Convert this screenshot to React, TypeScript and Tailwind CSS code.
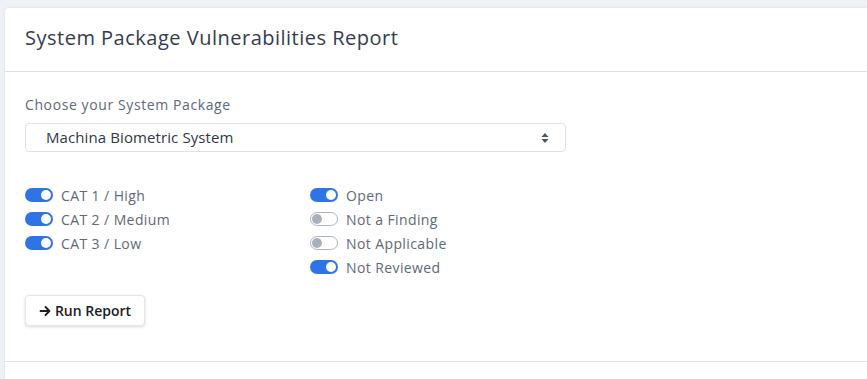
import React from "react";

function Toggle({ on, label }: { on: boolean; label: string }) {
  return (
    <div className="flex items-center h-6 gap-2">
      {on ? (
        <span className="relative w-[28px] h-[14px] rounded-full bg-[#2f74e4] flex items-center justify-end pr-[2px]">
          <span className="w-[10px] h-[10px] rounded-full bg-white" />
        </span>
      ) : (
        <span className="relative w-[28px] h-[14px] rounded-full bg-white border border-[#aeb4be] flex items-center pl-[1px]">
          <span className="w-[10px] h-[10px] rounded-full bg-[#a9b0bc]" />
        </span>
      )}
      <span className="text-[14px] text-[#5d6878] tracking-[0.4px]">{label}</span>
    </div>
  );
}

export default function App() {
  return (
    <div
      className="w-full h-[379px] overflow-hidden bg-[#eef2f7] pt-2 pl-[5px]"
      style={{ fontFamily: '"Open Sans", "Noto Sans", sans-serif' }}
    >
      <div className="bg-white rounded-[4px] -mr-6 h-[400px] shadow-[0_0_0_1px_#e6eaf0,0_0_4px_rgba(0,0,0,0.04)]">
        <div className="h-[64px] flex items-center px-5 border-b border-[#dde2e8]">
          <h1 className="text-[20px] text-[#333c4d] tracking-[0.5px] pb-[4px]">
            System Package Vulnerabilities Report
          </h1>
        </div>
        <div className="px-5 pt-[23px] h-[290px] border-b border-[#dde2e8]">
          <div className="text-[14px] text-[#5d6878] tracking-[0.6px] leading-5">Choose your System Package</div>
          <div className="mt-[8px] w-[541px] h-[29px] border border-[#dde2e8] rounded-[4px] flex items-center justify-between pl-5 pr-4">
            <span className="text-[15px] text-[#303846] tracking-[0.1px]">Machina Biometric System</span>
            <svg width="8" height="12" viewBox="0 0 8 12">
              <path d="M4 1 L7.5 5 H0.5 Z" fill="#4b5565" />
              <path d="M4 11 L7.5 7 H0.5 Z" fill="#4b5565" />
            </svg>
          </div>
          <div className="mt-[31px] flex">
            <div className="w-[285px] flex flex-col">
              <Toggle on label="CAT 1 / High" />
              <Toggle on label="CAT 2 / Medium" />
              <Toggle on label="CAT 3 / Low" />
            </div>
            <div className="flex flex-col">
              <Toggle on label="Open" />
              <Toggle on={false} label="Not a Finding" />
              <Toggle on={false} label="Not Applicable" />
              <Toggle on label="Not Reviewed" />
            </div>
          </div>
          <button className="mt-4 h-[31px] w-[120px] bg-white border border-[#e2e5ea] rounded-[4px] shadow-[0_1px_3px_rgba(0,0,0,0.15)] flex items-center justify-center gap-1 text-[14px] font-semibold text-[#1a1d23]">
            <svg width="12" height="12" viewBox="0 0 12 12" fill="none" stroke="#1a1d23" strokeWidth="1.8" strokeLinecap="round" strokeLinejoin="round">
              <path d="M1.5 6 H10.5 M6.5 2 L10.5 6 L6.5 10" />
            </svg>
            Run Report
          </button>
        </div>
      </div>
    </div>
  );
}
